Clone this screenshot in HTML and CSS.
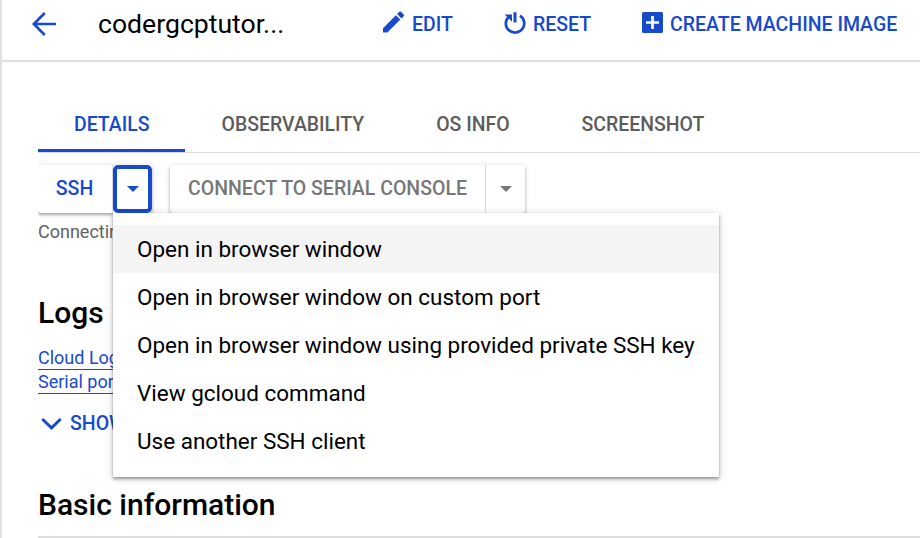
FILE: index.html
```html
<!DOCTYPE html>
<html lang="en">
<head>
<meta charset="utf-8">
<title>VM instance details</title>
<link rel="stylesheet" href="styles.css">
</head>
<body>
<div class="page">
  <header class="toolbar">
    <svg class="back" width="24" height="24" viewBox="0 0 24 24" fill="none" stroke="currentColor" stroke-width="2.6"><path d="M24 12H2M12.800 1 1.800 12l11 11"/></svg>
    <h1 class="title">codergcptutor...</h1>
    <button class="action edit">
      <svg width="22" height="22" viewBox="0 0 22 22" fill="currentColor"><path d="M0 17.200V21.500h4.400L17.300 8.600 12.900 4.200zM20.700 5.200c.5-.5.500-1.200 0-1.700L18 .800c-.5-.5-1.200-.5-1.700 0l-2.200 2.200 4.400 4.400z"/></svg>
      <span>EDIT</span>
    </button>
    <button class="action reset">
      <svg width="22" height="24" viewBox="0 0 22 24" fill="none" stroke="currentColor" stroke-width="2.700"><path d="M11 1.200v10.300" stroke-width="3"/><path d="M16 4.600A9.200 9.200 0 1 1 5 5.400"/><path d="M.700 3.500h7.300v7.300z" fill="currentColor" stroke="none"/></svg>
      <span>RESET</span>
    </button>
    <button class="action create">
      <svg width="21" height="21" viewBox="0 0 21 21"><rect width="21" height="21" rx="1.500" fill="currentColor"/><path d="M10.500 4v13M4 10.500h13" stroke="#fff" stroke-width="2.700"/></svg>
      <span>CREATE MACHINE IMAGE</span>
    </button>
  </header>

  <main class="content">
    <nav class="tabs">
      <a class="tab active">DETAILS</a>
      <a class="tab">OBSERVABILITY</a>
      <a class="tab">OS INFO</a>
      <a class="tab">SCREENSHOT</a>
    </nav>

    <div class="connect">
      <div class="split primary">
        <button class="main ssh">SSH</button>
        <button class="toggle focused" aria-label="SSH options"><i class="caret"></i></button>
        <ul class="menu">
          <li class="selected">Open in browser window</li>
          <li>Open in browser window on custom port</li>
          <li>Open in browser window using provided private SSH key</li>
          <li>View gcloud command</li>
          <li>Use another SSH client</li>
        </ul>
      </div>
      <div class="split serial">
        <button class="main">CONNECT TO SERIAL CONSOLE</button>
        <button class="toggle" aria-label="Console options"><i class="caret"></i></button>
      </div>
    </div>
    <p class="hint">Connecting</p>

    <h2 class="logs-title">Logs</h2>
    <div class="links">
      <a>Cloud Logging</a>
      <a>Serial port 1</a>
    </div>
    <button class="more">
      <svg width="22" height="14" viewBox="0 0 22 14" fill="none" stroke="currentColor" stroke-width="3"><path d="m1.300 2 9.200 8.800L19.700 2"/></svg>
      <span>SHOW</span>
    </button>
    <h2 class="basic-title">Basic information</h2>
  </main>
</div>
</body>
</html>
```
FILE: styles.css
```css
* { box-sizing: border-box; }
body {
  margin: 0;
  background: #fff;
  color: #000;
  font-family: Roboto, "Liberation Sans", sans-serif;
}
button {
  padding: 0;
  border: 0;
  background: none;
  color: #174acd;
  font: 500 19.5px/24px Roboto, "Liberation Sans", sans-serif;
}
.page {
  width: 920px;
  height: 538px;
  overflow: hidden;
  border-left: 2px solid #e1e1e1;
}
.toolbar {
  display: flex;
  height: 62px;
  padding: 0 0 12px 30px;
  align-items: center;
  border-bottom: 2px solid #e0e0e0;
}
.toolbar svg { flex: none; }
.back { color: #174acd; }
.title {
  width: 190px;
  margin: 0 0 0 42px;
  font-size: 26.6px;
  font-weight: 400;
  line-height: 32px;
  white-space: nowrap;
}
.action {
  display: flex;
  align-items: center;
  gap: 7px;
  white-space: nowrap;
}
.action span { padding-top: 1px; }
.edit { margin-left: 95px; }
.edit span { padding-top: 2px; }
.edit svg { margin-top: -4px; }
.reset svg { margin-top: -3px; }
.reset { margin-left: 51px; }
.create { margin-left: 51px; }
.create svg { margin-top: -4px; }
.content { padding-left: 36px; }
.tabs {
  display: flex;
  height: 91px;
  padding-top: 38px;
  border-bottom: 1px solid #dadada;
}
.tab {
  height: 53px;
  padding: 13px 36px 0;
  color: #5c5c5c;
  font-size: 19.45px;
  font-weight: 500;
  line-height: 24px;
  white-space: nowrap;
}
.tab.active {
  width: 147px;
  margin-right: .6px;
  color: #174acd;
  border-bottom: 3px solid #174acd;
  height: 52px;
}
.connect {
  display: flex;
  gap: 18px;
  margin-top: 12px;
}
.split {
  position: relative;
  display: flex;
  height: 48px;
  border-radius: 3px;
  box-shadow: 0 2px 3px rgba(0,0,0,.3), 0 0 6px rgba(0,0,0,.1);
}
.primary {
  z-index: 2;
  clip-path: inset(-10px -700px -300px 0);
}
.split .main { width: 75px; }
.split .ssh { padding-right: 1px; border-right: 1px solid #dadada; }
.toggle {
  display: flex;
  width: 39px;
  align-items: center;
  justify-content: center;
}
.focused {
  border: 4px solid #174acd;
  border-radius: 5px;
}
.caret {
  border: 6.5px solid transparent;
  border-top-color: currentColor;
  border-bottom: 0;
}
.serial button { color: #777; }
.serial .main { width: 315px; white-space: nowrap; }
.serial .toggle { width: 40px; border-left: 1px solid #dadada; }
.menu {
  position: absolute;
  z-index: 2;
  top: 48px;
  left: 75px;
  width: 606px;
  height: 264px;
  margin: 0;
  padding: 12px 0;
  list-style: none;
  background: #fff;
  box-shadow: 0 2px 3px rgba(0,0,0,.38), 0 1px 9px rgba(0,0,0,.14);
}
.menu li {
  height: 48px;
  padding-left: 24px;
  font-size: 22.48px;
  line-height: 49px;
  white-space: nowrap;
}
.menu .selected { background: #f4f4f4; }
.hint {
  margin: 8px 0 0;
  color: #626262;
  font-size: 18px;
  line-height: 22px;
}
h2 {
  margin: 0;
  font-size: 30px;
  font-weight: 500;
  line-height: 36px;
}
.logs-title { margin-top: 52px; }
.links {
  display: flex;
  flex-direction: column;
  align-items: flex-start;
  margin-top: 15px;
  color: #174acd;
  font-size: 18px;
  line-height: 23px;
}
.links a { border-bottom: 1px solid currentColor; }
.more {
  display: flex;
  align-items: center;
  gap: 7px;
  margin: 18px 0 0 3px;
}
.basic-title {
  height: 51px;
  margin-top: 51px;
  border-bottom: 2px solid #dedede;
}
```
